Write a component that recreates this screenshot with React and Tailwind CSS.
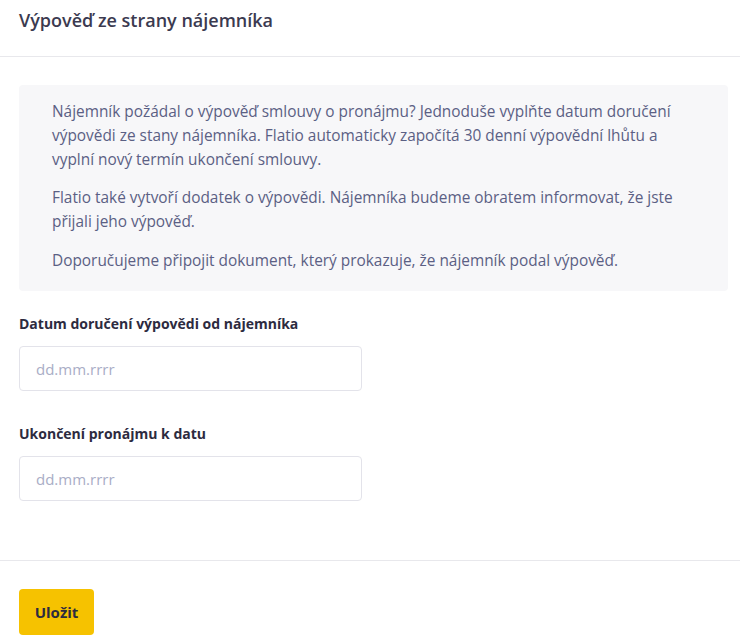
import React from 'react';

const Field = ({ label }) => (
  <div className="flex flex-col">
    <label className="text-[14px] font-bold text-[#2d2b3f] leading-[20px]">{label}</label>
    <input
      type="text"
      placeholder="dd.mm.rrrr"
      className="mt-[12px] w-[343px] h-[45px] rounded-[4px] border border-[#e3e3ea] px-[16px] text-[15px] text-[#2d2b3f] placeholder:text-[#a9adc6] outline-none"
    />
  </div>
);

const App = () => {
  return (
    <div className="w-[740px] bg-white font-['Open_Sans','Noto_Sans',sans-serif]">
      {/* Hlavička */}
      <div className="h-[57px] border-b border-[#e8e8ec] pl-[19px] pt-[7px]">
        <h1 className="text-[18px] font-semibold text-[#3b3a50] leading-[26px]">Výpověď ze strany nájemníka</h1>
      </div>

      {/* Obsah */}
      <div className="pl-[19px] pr-[12px] pt-[28px] pb-[59px]">
        <div className="rounded-[4px] bg-[#f7f7f9] pl-[33px] pr-[43px] pt-[15px] pb-[18px] text-[15.4px] leading-[24px] text-[#5b6084]">
          <p>
            Nájemník požádal o výpověď smlouvy o pronájmu? Jednoduše vyplňte datum doručení výpovědi ze stany
            nájemníka. Flatio automaticky započítá 30 denní výpovědní lhůtu a vyplní nový termín ukončení smlouvy.
          </p>
          <p className="mt-[14px]">
            Flatio také vytvoří dodatek o výpovědi. Nájemníka budeme obratem informovat, že jste přijali jeho výpověď.
          </p>
          <p className="mt-[15px]">Doporučujeme připojit dokument, který prokazuje, že nájemník podal výpověď.</p>
        </div>

        <div className="mt-[23px] flex flex-col gap-[33px]">
          <Field label="Datum doručení výpovědi od nájemníka" />
          <Field label="Ukončení pronájmu k datu" />
        </div>
      </div>

      {/* Patička */}
      <div className="border-t border-[#e8e8ec] pl-[19px] pt-[28px]">
        <button className="h-[46px] w-[75px] rounded-[4px] bg-[#f6c200] text-[15px] font-bold text-[#2d2b3f]">
          Uložit
        </button>
      </div>
    </div>
  );
};

export default App;
